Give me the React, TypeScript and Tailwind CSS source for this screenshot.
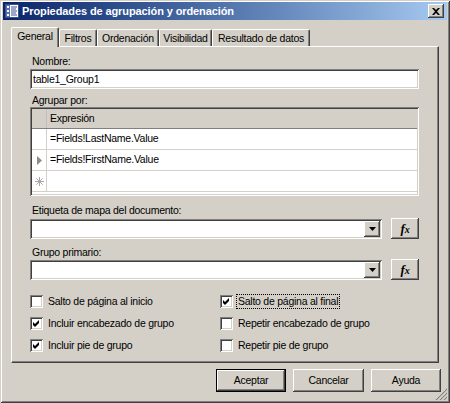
import React from 'react';

const raised =
  'shadow-[inset_-1px_-1px_0_#404040,inset_1px_1px_0_#ffffff,inset_-2px_-2px_0_#808080,inset_2px_2px_0_#d4d0c8]';
const sunken =
  'shadow-[inset_1px_1px_0_#808080,inset_-1px_-1px_0_#ffffff,inset_2px_2px_0_#404040,inset_-2px_-2px_0_#d4d0c8]';

function Check({ checked }: { checked: boolean }) {
  return (
    <div className={`w-[13px] h-[13px] bg-white shrink-0 flex items-center justify-center ${sunken}`}>
      {checked && (
        <svg width="7" height="7" viewBox="0 0 7 7">
          <path d="M0 2 L2 4 L6 0 L6 3 L2 7 L0 5 Z" fill="#000" />
        </svg>
      )}
    </div>
  );
}

function CheckRow({ checked, label, focus }: { checked: boolean; label: string; focus?: boolean }) {
  return (
    <div className="h-[22px] flex items-center">
      <Check checked={checked} />
      <span
        className={`ml-[4px] px-[1px] leading-[13px] ${focus ? 'outline outline-1 outline-dotted outline-black' : ''}`}
      >
        {label}
      </span>
    </div>
  );
}

function FxButton() {
  return (
    <div className={`w-[28px] h-[21px] bg-[#d4d0c8] flex items-center justify-center ${raised}`}>
      <span className="font-['Liberation_Serif',serif] italic font-bold text-[13px] leading-none text-black">
        f<span className="text-[10px]">x</span>
      </span>
    </div>
  );
}

function Combo() {
  return (
    <div className="h-[21px] flex items-center">
      <div className={`flex-1 h-[20px] bg-white flex items-center justify-end pr-[2px] ${sunken}`}>
        <div className={`w-[16px] h-[16px] bg-[#d4d0c8] flex items-center justify-center ${raised}`}>
          <svg width="7" height="4" viewBox="0 0 7 4">
            <path d="M0 0 H7 L3.5 4 Z" fill="#000" />
          </svg>
        </div>
      </div>
      <div className="ml-[9px]">
        <FxButton />
      </div>
    </div>
  );
}

function Tab({ label, width, selected }: { label: string; width: number; selected?: boolean }) {
  return (
    <div
      style={{ width }}
      className={
        selected
          ? 'h-[20px] bg-[#d4d0c8] border-l border-t border-white border-r border-r-[#404040] rounded-t-[2px] flex items-center justify-center pb-[2px] relative z-10 shadow-[inset_-1px_0_0_#808080]'
          : 'h-[17px] mb-[1px] bg-[#d4d0c8] border-l border-t border-white border-r border-r-[#404040] rounded-t-[2px] flex items-center justify-center shadow-[inset_-1px_0_0_#808080]'
      }
    >
      <span className="leading-[13px]">{label}</span>
    </div>
  );
}

function Button({ label, isDefault }: { label: string; isDefault?: boolean }) {
  return (
    <div
      className={`h-[23px] ${isDefault ? 'border border-black' : ''} bg-[#d4d0c8]`}
      style={{ width: label === 'Cancelar' ? 71 : 70 }}
    >
      <div className={`w-full h-full flex items-center justify-center ${raised}`}>{label}</div>
    </div>
  );
}

export default function App() {
  return (
    <div className="w-[450px] h-[403px] bg-[#d4d0c8] relative overflow-hidden flex flex-col pt-[2px] px-[3px] text-black text-[10.5px] tracking-[-0.25px] font-['Liberation_Sans',Arial,sans-serif] shadow-[inset_1px_1px_0_#d4d0c8,inset_-1px_-1px_0_#404040,inset_2px_2px_0_#ffffff,inset_-2px_-2px_0_#808080]">
      {/* Title bar */}
      <div className="h-[18px] bg-gradient-to-r from-[#0a246a] to-[#a6caf0] flex items-center pl-[1px] pr-[3px]">
        <svg width="16" height="16" viewBox="0 0 16 16" className="shrink-0">
          <rect x="1.5" y="1.5" width="13" height="13" fill="#ffffff" stroke="#3a4f8f" />
          <rect x="2" y="2" width="4" height="12" fill="#5a6fb0" />
          <rect x="3" y="3" width="2" height="2" fill="#ffffff" />
          <rect x="3" y="7" width="2" height="2" fill="#ffffff" />
          <rect x="3" y="11" width="2" height="2" fill="#ffffff" />
          <path d="M7 4 H13 M7 6 H12 M7 8 H13 M7 10 H12 M7 12 H13" stroke="#3a4f8f" strokeWidth="1" />
        </svg>
        <span className="ml-[2px] text-white font-bold text-[11px] tracking-[-0.1px] leading-[14px]">
          Propiedades de agrupación y ordenación
        </span>
        <div className="flex-1" />
        <div className={`w-[16px] h-[14px] bg-[#d4d0c8] flex items-center justify-center ${raised}`}>
          <svg width="8" height="7" viewBox="0 0 8 7">
            <path d="M0 0 H2 L4 2 L6 0 H8 L5 3.5 L8 7 H6 L4 5 L2 7 H0 L3 3.5 Z" fill="#000" />
          </svg>
        </div>
      </div>

      {/* Tabs */}
      <div className="mt-[7px] ml-[8px] h-[20px] flex items-end mb-[-1px] relative z-10">
        <Tab label="General" width={48} selected />
        <Tab label="Filtros" width={38} />
        <Tab label="Ordenación" width={62} />
        <Tab label="Visibilidad" width={53} />
        <Tab label="Resultado de datos" width={98} />
      </div>

      {/* Panel */}
      <div className="mx-[8px] h-[317px] border-l border-t border-white border-r border-b border-r-[#404040] border-b-[#404040] shadow-[inset_-1px_-1px_0_#808080] pt-[8px] pl-[18px] pr-[19px] flex flex-col">
        <div className="h-[13px] leading-[13px] pl-[2px]">Nombre:</div>
        <div className={`mt-[1px] h-[20px] bg-white flex items-center pl-[3px] ${sunken}`}>
          <span className="leading-[13px]">table1_Group1</span>
        </div>

        <div className="mt-[5px] h-[13px] leading-[13px] pl-[2px]">Agrupar por:</div>
        <div className={`h-[89px] bg-white p-[2px] ${sunken}`}>
          <div className="flex flex-col h-full">
            <div className="h-[20px] bg-[#d4d0c8] border-b border-[#808080] flex">
              <div className="w-[15px] border-r border-[#c0c0c0] shrink-0" />
              <div className="flex items-center pl-[3px]">Expresión</div>
            </div>
            <div className="h-[21px] border-b border-[#d4d0c8] flex">
              <div className="w-[15px] border-r border-[#d4d0c8] shrink-0" />
              <div className="flex items-center pl-[3px]">=Fields!LastName.Value</div>
            </div>
            <div className="h-[21px] border-b border-[#d4d0c8] flex">
              <div className="w-[15px] border-r border-[#d4d0c8] shrink-0 flex items-center pl-[5px]">
                <svg width="5" height="9" viewBox="0 0 5 9">
                  <path d="M0 0 L5 4.5 L0 9 Z" fill="#8c8c8c" />
                </svg>
              </div>
              <div className="flex items-center pl-[3px]">=Fields!FirstName.Value</div>
            </div>
            <div className="h-[21px] border-b border-[#d4d0c8] flex">
              <div className="w-[15px] border-r border-[#d4d0c8] shrink-0 flex items-center pl-[3px]">
                <svg width="9" height="9" viewBox="0 0 9 9">
                  <path
                    d="M4.5 0 V9 M0 4.5 H9 M1.3 1.3 L7.7 7.7 M7.7 1.3 L1.3 7.7"
                    stroke="#a8a8a8"
                    strokeWidth="1"
                  />
                </svg>
              </div>
              <div className="flex-1" />
            </div>
            <div className="flex-1" />
          </div>
        </div>

        <div className="mt-[8px] h-[13px] leading-[13px] pl-[2px]">Etiqueta de mapa del documento:</div>
        <div className="mt-[1px]">
          <Combo />
        </div>

        <div className="mt-[7px] h-[13px] leading-[13px] pl-[2px]">Grupo primario:</div>
        <Combo />

        <div className="mt-[10px] grid grid-cols-[190px_1fr]">
          <div className="flex flex-col">
            <CheckRow checked={false} label="Salto de página al inicio" />
            <CheckRow checked label="Incluir encabezado de grupo" />
            <CheckRow checked label="Incluir pie de grupo" />
          </div>
          <div className="flex flex-col">
            <CheckRow checked label="Salto de página al final" focus />
            <CheckRow checked={false} label="Repetir encabezado de grupo" />
            <CheckRow checked={false} label="Repetir pie de grupo" />
          </div>
        </div>
      </div>

      {/* Buttons */}
      <div className="mt-[6px] flex justify-end gap-[7px] pr-[6px]">
        <Button label="Aceptar" isDefault />
        <Button label="Cancelar" />
        <Button label="Ayuda" />
      </div>

      {/* Size grip */}
      <svg width="12" height="12" viewBox="0 0 12 12" className="absolute right-[3px] bottom-[3px]">
        <path d="M11 1 L1 11 M11 5 L5 11 M11 9 L9 11" stroke="#ffffff" strokeWidth="1" />
        <path d="M12 1 L1 12 M12 5 L5 12 M12 9 L9 12" stroke="#808080" strokeWidth="1.2" />
      </svg>
    </div>
  );
}
